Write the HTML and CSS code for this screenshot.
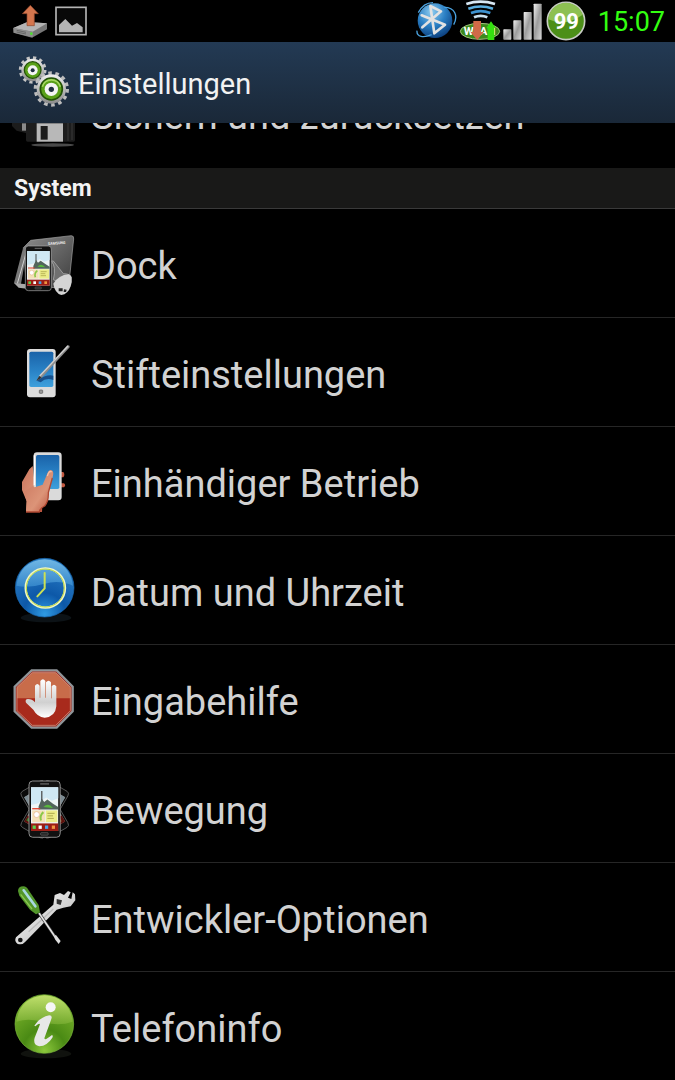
FILE: index.html
```
<!DOCTYPE html>
<html lang="de">
<head>
    <meta charset="UTF-8">
    <meta name="viewport" content="width=device-width, initial-scale=1.0">
    <title>Einstellungen</title>
    <link rel="stylesheet" href="styles.css">
</head>
<body>
    <div class="status-bar">
        <div class="status-group">
            <svg class="status-icon" width="50" height="42" viewBox="0 0 150 126">
                <path d="M40 84 L82 66 L141 70 L141 88 L96 113 L40 98Z" fill="#777"/>
                <path d="M40 84 L82 66 L141 70 L98 95Z" fill="#b4b4b4"/>
                <path d="M40 84 L98 95 L98 112 L42 98Z" fill="#8e8e8e"/>
                <path d="M50 91 L78 97 M50 96 L78 102" stroke="#555" stroke-width="2"/>
                <circle cx="94" cy="101" r="4" fill="#4ce02c"/>
                <path d="M91 16 L115 41 L103 41 L103 77 L81 77 L81 41 L67 41Z" fill="#d4764e" stroke="#8c452a" stroke-width="2"/>
            </svg>
            <svg class="status-icon" width="42" height="42" viewBox="150 0 126 126">
                <rect x="168" y="22" width="90" height="82" fill="#080808" stroke="#b4b4b4" stroke-width="5"/>
                <path d="M177 97 L177 75 L196 57 L216 77 L231 69 L248 82 L248 97Z" fill="#b4b4b4"/>
            </svg>
        </div>
        <div class="status-group">
            <svg class="status-icon" width="42" height="42" viewBox="30 0 126 126">
                <defs>
                    <radialGradient id="btBlue" cx="0.4" cy="0.25" r="0.8">
                        <stop offset="0" stop-color="#8fcdf0"/>
                        <stop offset="0.5" stop-color="#2a7fc4"/>
                        <stop offset="1" stop-color="#0a3a78"/>
                    </radialGradient>
                </defs>
                <circle cx="90" cy="62" r="52" fill="url(#btBlue)"/>
                <path d="M36 92 C34 112 56 114 80 104 M118 22 C150 22 160 48 146 74 M40 38 C52 14 72 8 84 8" fill="none" stroke="#4ba3e0" stroke-width="4"/>
                <path d="M50 46 L120 74 L88 100 L76 18 L108 34 L52 82" fill="none" stroke="#e2e2e2" stroke-width="8" stroke-linejoin="round" stroke-linecap="round"/>
            </svg>
            <svg class="status-icon" width="45" height="42" viewBox="156 0 135 126">
                <path d="M184 12 Q226 -2 270 12" fill="none" stroke="#d8e8f4" stroke-width="8"/>
                <path d="M190 26 Q227 13 264 26" fill="none" stroke="#5aaee0" stroke-width="8"/>
                <path d="M198 39 Q227 28 256 39" fill="none" stroke="#3d92d0" stroke-width="8"/>
                <path d="M207 52 Q227 43 247 52" fill="none" stroke="#c8e0f0" stroke-width="8"/>
                <ellipse cx="225" cy="94" rx="59" ry="24" fill="#3c8a1c" stroke="#9ec27c" stroke-width="3"/>
                <text class="wlan-label" x="176" y="106">WLAN</text>
                <path d="M205 63 L228 63 L228 96 L236 96 L217 120 L196 96 L205 96Z" fill="#d06a48"/>
                <path d="M258 64 L272 84 L268 84 L268 120 L248 120 L248 84 L244 84Z" fill="#35e010"/>
            </svg>
            <svg class="status-icon" width="41" height="42" viewBox="291 0 123 126">
                <defs>
                    <linearGradient id="bar" x2="1" y2="1">
                        <stop offset="0" stop-color="#f2f2f2"/>
                        <stop offset="0.5" stop-color="#9c9c9c"/>
                        <stop offset="1" stop-color="#d8d8d8"/>
                    </linearGradient>
                </defs>
                <g fill="url(#bar)">
                    <rect x="295" y="88" width="24" height="31" rx="2"/>
                    <rect x="325" y="61" width="24" height="58" rx="2"/>
                    <rect x="356" y="36" width="24" height="83" rx="2"/>
                    <rect x="386" y="11" width="24" height="108" rx="2"/>
                </g>
            </svg>
            <svg class="status-icon" width="46" height="42" viewBox="414 0 138 126">
                <circle cx="483" cy="63" r="56" fill="#4c8f18" stroke="#c8ccc4" stroke-width="5"/>
                <path d="M430 58 A53 53 0 0 1 533 44 Q480 82 430 58Z" fill="#8dc052"/>
                <text class="battery-label" x="484" y="88">99</text>
            </svg>
            <time class="clock">15:07</time>
        </div>
    </div>

    <header class="title-bar">
        <svg width="78" height="81" viewBox="0 126 234 243">
            <defs>
                <linearGradient id="steel" x2="0" y2="1">
                    <stop offset="0" stop-color="#f0f0f0"/>
                    <stop offset="1" stop-color="#8a8a8a"/>
                </linearGradient>
            </defs>
            <circle cx="98" cy="210" r="37" fill="none" stroke="#c4c4c4" stroke-width="9" stroke-dasharray="9.7 9.67"/>
            <circle cx="98" cy="210" r="34" fill="url(#steel)"/>
            <circle cx="98" cy="210" r="25" fill="#59a018" stroke="#245208" stroke-width="4"/>
            <circle cx="98" cy="211" r="15" fill="#f4f4f4"/>
            <circle cx="98" cy="211" r="6" fill="#203040"/>
            <circle cx="154" cy="267" r="48" fill="none" stroke="#bcbcbc" stroke-width="10" stroke-dasharray="10.8 10.74"/>
            <circle cx="154" cy="267" r="44" fill="url(#steel)"/>
            <circle cx="154" cy="267" r="33" fill="#59a018" stroke="#245208" stroke-width="5"/>
            <path d="M127 260 A28 28 0 0 1 181 260" fill="none" stroke="#a4d860" stroke-width="5"/>
            <circle cx="154" cy="268" r="20" fill="#f4f4f4"/>
            <circle cx="154" cy="268" r="8" fill="#203040"/>
        </svg>
        <h1>Einstellungen</h1>
    </header>

    <main class="settings">
        <a class="row" href="#backup">
            <svg width="90" height="90" viewBox="0 0 270 270">
                <path d="M36 100 L80 90 L80 190 L50 182 L36 168Z" fill="#1c1c1c"/>
                <path d="M66 160 h12 v22 h-12z" fill="#8a8a8a"/>
                <rect x="78" y="70" width="147" height="145" rx="5" fill="#1d1d1d"/>
                <path d="M204 120 v92 M216 120 v90" stroke="#343434" stroke-width="4"/>
                <rect x="110" y="160" width="79" height="55" fill="#b8b8b8"/>
                <rect x="122" y="168" width="21" height="41" fill="#1c1c1c"/>
                <ellipse cx="158" cy="225" rx="64" ry="5" fill="#4a4a4a"/>
            </svg>
            <span>Sichern und zurücksetzen</span>
        </a>

        <h2 class="section">System</h2>

        <a class="row" href="#dock">
            <svg width="90" height="90" viewBox="0 -4 270 270">
                <defs>
                    <linearGradient id="dockGrey" x2="1" y2="1">
                        <stop offset="0" stop-color="#8c8c8c"/>
                        <stop offset="1" stop-color="#3c3c3c"/>
                    </linearGradient>
                    <!-- phone with its home screen, also used by "Bewegung" -->
                    <g id="phone">
                        <rect x="0" y="0" width="78" height="134" rx="9" fill="#111" stroke="#aaa" stroke-width="2"/>
                        <rect x="5" y="15" width="68" height="104" fill="#eef4f6"/>
                        <path d="M5 15 h68 v26 l-16 6 l-14 -8 l-20 14 l-18 4z" fill="#cfe8f4"/>
                        <path d="M24 60 L32 42 L38 50 L46 44 L60 54 L73 62 L73 68 L24 68Z" fill="#53645c"/>
                        <path d="M36 62 q12 -12 24 2 z" fill="#58b83c"/>
                        <path d="M32 24 v22" stroke="#444" stroke-width="3"/>
                        <path d="M8 66 h20" stroke="#e03c24" stroke-width="3"/>
                        <rect x="8" y="70" width="32" height="28" fill="#f4e0b8"/>
                        <circle cx="19" cy="80" r="7" fill="#fff" stroke="#d89060"/>
                        <path d="M30 94 q-4 -12 6 -20" stroke="#8cc848" stroke-width="5" fill="none"/>
                        <rect x="42" y="70" width="29" height="28" fill="#ecec88"/>
                        <path d="M46 77 h18 M46 83 h14 M46 89 h16" stroke="#a09c40" stroke-width="2"/>
                        <rect x="5" y="101" width="68" height="18" fill="#9c1c14"/>
                        <path d="M9 110 h8" stroke="#5cd04c" stroke-width="8"/>
                        <path d="M24 110 h8" stroke="#fff" stroke-width="8"/>
                        <path d="M40 110 h8" stroke="#48a4e4" stroke-width="8"/>
                        <path d="M57 110 h8" stroke="#f09440" stroke-width="8"/>
                        <path d="M28 7 h22" stroke="#999" stroke-width="2"/>
                        <rect x="29" y="123" width="19" height="6" rx="2" fill="#222" stroke="#999"/>
                    </g>
                </defs>
                <path d="M70 82 L92 60 L214 46 Q222 46 221 56 L207 188 Q205 202 192 202 L80 200Z" fill="url(#dockGrey)" stroke="#a4a4a4" stroke-width="2"/>
                <text class="dock-brand" x="144" y="74" transform="rotate(-4 144 74)">SAMSUNG</text>
                <path d="M70 80 L80 94 L62 196 L42 188Z" fill="#787878"/>
                <path d="M80 92 L52 190" stroke="#d0d0d0" stroke-width="3"/>
                <path d="M42 188 L80 192 L80 205 L56 202Z" fill="#a8a8a8"/>
                <path d="M154 122 Q170 140 160 178 L180 188 L214 172 Q212 160 190 160 L160 122Z" fill="#707070" stroke="#bbb" stroke-width="2"/>
                <path d="M160 190 Q176 164 206 162 Q222 168 212 198 Q204 222 184 224 Q164 218 160 190Z" fill="#d4d4d4"/>
                <path d="M176 204 h12 v9 h-12z M192 207 l8 1 l-2 7 l-7 0z" fill="#222"/>
                <use href="#phone" x="76" y="77"/>
            </svg>
            <span>Dock</span>
        </a>
        <a class="row" href="#stift">
            <svg width="90" height="90" viewBox="0 -6 270 270">
                <defs>
                    <linearGradient id="screen" x2="0" y2="1">
                        <stop offset="0" stop-color="#1a62a8"/>
                        <stop offset="0.5" stop-color="#2880c4"/>
                        <stop offset="1" stop-color="#3ea0dc"/>
                    </linearGradient>
                </defs>
                <rect x="81" y="57" width="86" height="145" rx="9" fill="#dcdcdc"/>
                <rect x="88" y="65" width="72" height="106" rx="5" fill="url(#screen)"/>
                <path d="M110 152 Q140 132 160 137 L160 150 Q138 142 122 157Z" fill="#17508c"/>
                <rect x="118" y="180" width="10" height="10" rx="2" fill="#999" stroke="#555" stroke-width="2"/>
                <path d="M109 152 L118 138 L202 46 Q210 44 209 52 L125 143Z" fill="#8c8c8c"/>
                <path d="M119 138 L204 48" stroke="#d0d0d0" stroke-width="4"/>
                <path d="M109 152 L118 138 L125 143Z" fill="#333"/>
            </svg>
            <span>Stifteinstellungen</span>
        </a>
        <a class="row" href="#einhand">
            <svg width="90" height="90" viewBox="0 -9 270 270">
                <defs>
                    <linearGradient id="skin" x2="1" y2="1">
                        <stop offset="0" stop-color="#c9745c"/>
                        <stop offset="0.6" stop-color="#dc9478"/>
                        <stop offset="1" stop-color="#b64c38"/>
                    </linearGradient>
                </defs>
                <path d="M182 96 h8 q6 8 0 16 h-8z M182 130 h10 q7 6 0 12 h-10z" fill="#c25840"/>
                <path d="M98 78 L88 88 L66 126 L66 150 L80 184 L78 216 L126 216 L130 140 L104 130Z" fill="url(#skin)"/>
                <rect x="101" y="37" width="84" height="144" rx="10" fill="#dadada"/>
                <rect x="108" y="45" width="70" height="102" rx="5" fill="url(#screen)"/>
                <path d="M72 156 L98 138 L104 142 L128 134 L144 96 Q150 86 158 93 Q162 100 157 114 L145 158 Q146 184 134 198 Q120 204 118 216 L78 216 L80 184Z" fill="url(#skin)"/>
                <path d="M157 114 L145 158 Q146 184 134 198 Q120 204 118 216 H78" fill="none" stroke="#b04832" stroke-width="4"/>
                <path d="M142 108 Q147 90 155 96" fill="none" stroke="#f4c0a8" stroke-width="4"/>
                <path d="M103 46 v90" stroke="#fff" stroke-width="4"/>
            </svg>
            <span>Einhändiger Betrieb</span>
        </a>
        <a class="row" href="#datum">
            <svg width="90" height="90" viewBox="0 3 270 270">
                <defs>
                    <radialGradient id="blueBall" cx="0.5" cy="0.95" r="0.9">
                        <stop offset="0" stop-color="#2f9be4"/>
                        <stop offset="0.4" stop-color="#0d58a8"/>
                        <stop offset="1" stop-color="#2c80c8"/>
                    </radialGradient>
                    <linearGradient id="blueShine" x2="0" y2="1">
                        <stop offset="0" stop-color="#8ccdf0"/>
                        <stop offset="1" stop-color="#3f93d4"/>
                    </linearGradient>
                </defs>
                <ellipse cx="138" cy="218" rx="76" ry="14" fill="#0c1216"/>
                <circle cx="134" cy="128" r="88" fill="url(#blueBall)" stroke="#1868b0" stroke-width="2"/>
                <path d="M49 122 Q60 48 134 43 Q208 48 219 122 Q178 104 134 116 Q88 130 49 122Z" fill="url(#blueShine)" opacity="0.7"/>
                <circle cx="136" cy="129" r="59" fill="none" stroke="#f0f6c8" stroke-width="7"/>
                <circle cx="136" cy="129" r="57" fill="none" stroke="#bcd83c" stroke-width="3"/>
                <path d="M134 84 V130 L112 154" fill="none" stroke="#cbe054" stroke-width="6" stroke-linecap="round"/>
            </svg>
            <span>Datum und Uhrzeit</span>
        </a>
        <a class="row" href="#eingabehilfe">
            <svg width="90" height="90" viewBox="0 0 270 270">
                <defs>
                    <linearGradient id="palm" x2="0" y2="1">
                        <stop offset="0" stop-color="#fff"/>
                        <stop offset="0.6" stop-color="#d0d0d0"/>
                        <stop offset="1" stop-color="#fff"/>
                    </linearGradient>
                </defs>
                <path d="M95 46 H170 L218 95 V169 L170 218 H95 L44 169 V95Z" fill="#a82a1c" stroke="#8f9498" stroke-width="7"/>
                <path d="M97 53 H167 L211 97 V130 H51 V97Z" fill="#c86c4a"/>
                <path d="M97 53 H167 L211 97 V167 L167 211 H97 L51 167 V97Z" fill="none" stroke="#d0a090" stroke-width="2"/>
                <path d="M105 142 V92 Q112 82 119 92 V128 L121 128 V78 Q129 68 136 78 V128 L138 128 V82 Q146 72 153 82 V130 L155 130 V94 Q162 84 169 94 V154 Q166 186 134 188 Q112 186 100 164 L78 143 Q74 133 84 132 Q96 132 105 142Z" fill="url(#palm)"/>
            </svg>
            <span>Eingabehilfe</span>
        </a>
        <a class="row" href="#bewegung">
            <svg width="90" height="90" viewBox="0 -4 270 270">
                <g opacity="0.6">
                    <use href="#phone" transform="translate(134 132) rotate(30) scale(1.03 1.2) translate(-39 -67)"/>
                    <use href="#phone" transform="translate(134 132) rotate(-30) scale(1.03 1.2) translate(-39 -67)"/>
                </g>
                <use href="#phone" transform="translate(87 47) scale(1.2 1.26)"/>
            </svg>
            <span>Bewegung</span>
        </a>
        <a class="row" href="#entwickler">
            <svg width="90" height="90" viewBox="0 8 270 270">
                <defs>
                    <linearGradient id="chrome" x2="1" y2="1">
                        <stop offset="0" stop-color="#fff"/>
                        <stop offset="1" stop-color="#b0b0b0"/>
                    </linearGradient>
                </defs>
                <path d="M48 201 L160 103 L164 74 L180 68 L192 74 L204 62 L212 66 L204 82 L214 86 L218 66 L225 72 L226 90 L212 108 L190 112 L170 118 L76 214 Q66 226 52 220 Q42 212 48 201Z" fill="url(#chrome)"/>
                <circle cx="61" cy="209" r="7" fill="#111"/>
                <path d="M86 184 L160 116" stroke="#bbb" stroke-width="4"/>
                <path d="M170 86 L186 90 L182 104 L170 100Z" fill="#333"/>
                <path d="M117 128 L163 196" stroke="#333" stroke-width="9"/>
                <path d="M117 128 L163 196" stroke="#e4e4e4" stroke-width="5"/>
                <path d="M160 196 L168 194 L182 212 L176 221 L166 208Z" fill="#ddd"/>
                <path d="M54 62 Q54 48 70 48 Q80 48 86 60 L116 104 L120 126 L108 132 L90 118 L58 76Z" fill="#52962a"/>
                <path d="M71 60 L106 108" stroke="#a8d8e0" stroke-width="8" stroke-linecap="round"/>
                <path d="M62 72 L96 116" stroke="#8cc850" stroke-width="4"/>
            </svg>
            <span>Entwickler-Optionen</span>
        </a>
        <a class="row" href="#telefoninfo">
            <svg width="90" height="90" viewBox="0 3 270 270">
                <defs>
                    <radialGradient id="greenBall" cx="0.5" cy="0.95" r="0.9">
                        <stop offset="0" stop-color="#8cc83c"/>
                        <stop offset="0.4" stop-color="#4a8a14"/>
                        <stop offset="1" stop-color="#7cb42c"/>
                    </radialGradient>
                    <linearGradient id="greenShine" x2="0" y2="1">
                        <stop offset="0" stop-color="#d4ec80"/>
                        <stop offset="1" stop-color="#7cb034"/>
                    </linearGradient>
                </defs>
                <ellipse cx="138" cy="218" rx="76" ry="14" fill="#10120e"/>
                <circle cx="133" cy="129" r="88" fill="url(#greenBall)" stroke="#7cb83c" stroke-width="2"/>
                <path d="M49 122 Q60 48 134 43 Q208 48 218 122 Q178 136 134 124 Q88 110 49 122Z" fill="url(#greenShine)" opacity="0.75"/>
                <circle cx="152" cy="79" r="15" fill="#f6f6f6"/>
                <path d="M103 134 Q120 108 148 103 Q158 104 154 114 L133 172 Q134 180 156 162 Q160 164 157 170 Q142 194 118 196 Q98 192 104 170 L120 130 Q118 124 106 136Z" fill="#e8e8e8"/>
            </svg>
            <span>Telefoninfo</span>
        </a>
    </main>
</body>
</html>
```

FILE: styles.css
```
* {
    box-sizing: border-box;
}

body {
    display: flex;
    flex-direction: column;
    height: 100vh;
    margin: 0;
    background: #000;
    color: #d2d2d2;
    font-family: Roboto, "Liberation Sans", sans-serif;
    overflow: hidden;
}

svg {
    display: block;
    flex: none;
}

/* Status bar */
.status-bar {
    display: flex;
    justify-content: space-between;
    flex: none;
    padding-right: 10px;
}

.status-group {
    display: flex;
    align-items: center;
}

.clock {
    margin-left: 9px;
    padding-top: 2px;
    color: #33ff11;
    font-size: 27px;
    line-height: 40px;
}

.battery-label {
    fill: #fff;
    font-size: 66px;
    font-weight: bold;
    text-anchor: middle;
}

.wlan-label {
    fill: #fff;
    font-size: 34px;
    font-weight: bold;
}

.dock-brand {
    fill: #eee;
    font-size: 11px;
    font-weight: bold;
}

/* Title bar */
.title-bar {
    display: flex;
    align-items: center;
    flex: none;
    background: linear-gradient(#233a54, #1a2838);
}

.title-bar h1 {
    margin: 0;
    padding-top: 2px;
    color: #f2f2f2;
    font-size: 29px;
    font-weight: normal;
}

/* List, scrolled to its end */
.settings {
    display: flex;
    flex-direction: column;
    justify-content: flex-end;
    flex: 1;
    min-height: 0;
    overflow: hidden;
}

.section {
    flex: none;
    margin: 0;
    padding: 2px 14px 0;
    border-bottom: 1px solid #3a3a3a;
    background: #191918;
    color: #f4f4f4;
    font-size: 23px;
    line-height: 38px;
}

.row {
    display: flex;
    align-items: center;
    flex: none;
    height: 109px;
    padding-top: 2px;
    border-bottom: 1px solid #262626;
    color: inherit;
    font-size: 38px;
    text-decoration: none;
}

.row span {
    padding: 3px 0 0 1px;
}

.row:first-child,
.row:last-child {
    border-bottom: 0;
}

.row:last-child {
    height: 108px;
}
```
